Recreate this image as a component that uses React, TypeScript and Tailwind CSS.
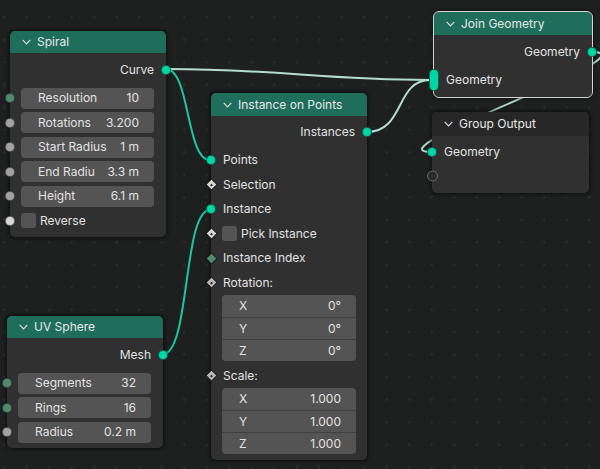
import React from 'react';

type SocketKind = 'geo' | 'float' | 'int' | 'bool' | 'dBool' | 'dInt' | 'dVec' | 'empty';

function Socket({ kind, side }: { kind: SocketKind; side: 'l' | 'r' }) {
  const pos = side === 'l' ? 'left-[-5px]' : 'right-[-5px]';
  if (kind === 'dBool' || kind === 'dInt' || kind === 'dVec') {
    const color = kind === 'dInt' ? 'bg-[#4f8a6e]' : kind === 'dBool' ? 'bg-[#d6d6d6]' : 'bg-[#b8b8b8]';
    return (
      <span className={`absolute ${pos} top-1/2 -translate-y-1/2 w-[10px] h-[10px] flex items-center justify-center`}>
        <span className={`w-[7px] h-[7px] rotate-45 ${color} outline outline-1 outline-[#1a1a1a]/70 flex items-center justify-center`}>
          {kind !== 'dInt' && <span className="w-[2px] h-[2px] bg-[#2a2a2a]" />}
        </span>
      </span>
    );
  }
  if (kind === 'empty') {
    return (
      <span className={`absolute ${pos} top-1/2 -translate-y-1/2 w-[11px] h-[11px] rounded-full border-[1.5px] border-[#6a6a6a] bg-[#2c2c2c]`} />
    );
  }
  const color =
    kind === 'geo' ? 'bg-[#00d6a3]' : kind === 'int' ? 'bg-[#4f8a6e]' : kind === 'bool' ? 'bg-[#d8d8d8]' : 'bg-[#a3a3a3]';
  return (
    <span className={`absolute ${pos} top-1/2 -translate-y-1/2 w-[10px] h-[10px] rounded-full ${color} border border-[#1a1a1a]/60`} />
  );
}

function Chevron() {
  return (
    <svg width="9" height="6" viewBox="0 0 9 6" className="shrink-0">
      <polyline points="0.7,0.8 4.5,4.8 8.3,0.8" fill="none" stroke="#dcdcdc" strokeWidth="1.2" />
    </svg>
  );
}

function Node({
  pos,
  title,
  header = 'bg-[#1e6e5b]',
  headerH = 'h-[22px]',
  selected = false,
  children,
}: {
  pos: string;
  title: string;
  header?: string;
  headerH?: string;
  selected?: boolean;
  children: React.ReactNode;
}) {
  return (
    <div
      className={`absolute ${pos} rounded-[5px] bg-[#303030] shadow-[0_0_3px_2px_rgba(0,0,0,0.4)] ${
        selected ? 'outline outline-[1.5px] outline-[#d4d4d4]' : ''
      }`}
    >
      <div className={`${headerH} ${header} rounded-t-[5px] flex items-center gap-[6px] pl-[12px] text-[12px] text-[#e8e8e8]`}>
        <Chevron />
        <span>{title}</span>
      </div>
      {children}
    </div>
  );
}

function OutRow({ label, kind, h = 'h-[25px]' }: { label: string; kind: SocketKind; h?: string }) {
  return (
    <div className={`relative ${h} flex items-center justify-end pr-[12px]`}>
      <span>{label}</span>
      <Socket kind={kind} side="r" />
    </div>
  );
}

function InRow({ label, kind, h = 'h-[24.5px]' }: { label: string; kind?: SocketKind; h?: string }) {
  return (
    <div className={`relative ${h} flex items-center pl-[12px]`}>
      <span>{label}</span>
      {kind && <Socket kind={kind} side="l" />}
    </div>
  );
}

function FieldRow({ label, value, kind }: { label: string; value: string; kind: SocketKind }) {
  return (
    <div className="relative h-[24.5px] flex items-center pl-[11px] pr-[12px]">
      <div className="flex-1 h-[21px] rounded-[4px] bg-[#545454] flex items-center justify-between pl-[17px] pr-[15px]">
        <span>{label}</span>
        <span>{value}</span>
      </div>
      <Socket kind={kind} side="l" />
    </div>
  );
}

function CheckRow({ label, kind, h = 'h-[24.5px]' }: { label: string; kind: SocketKind; h?: string }) {
  return (
    <div className={`relative ${h} flex items-center gap-[4px] pl-[11px]`}>
      <span className="w-[15px] h-[15px] rounded-[3px] bg-[#545454]" />
      <span>{label}</span>
      <Socket kind={kind} side="l" />
    </div>
  );
}

function VectorField({ values }: { values: [string, string][] }) {
  return (
    <div className="px-[11px]">
      <div className="rounded-[4px] bg-[#545454] flex flex-col">
        {values.map(([axis, v], i) => (
          <div
            key={axis}
            className={`h-[22px] flex items-center justify-between pl-[17px] pr-[15px] ${
              i > 0 ? 'border-t border-[#414141]' : ''
            }`}
          >
            <span>{axis}</span>
            <span>{v}</span>
          </div>
        ))}
      </div>
    </div>
  );
}

function Wires() {
  return (
    <svg className="absolute inset-0 pointer-events-none" width="600" height="469" viewBox="0 0 600 469">
      <g fill="none" strokeWidth="2" strokeLinecap="round">
        <path d="M591,52 C660,52 365,152 432,152" stroke="#aad6c7" />
        <path d="M166,69 C280,69 320,80 430,80" stroke="#b4ddd0" />
        <path d="M367,132 C405,132 395,80 430,80" stroke="#b4ddd0" />
        <path d="M166,69 C190,69 186,160 210,160" stroke="#1ec49e" />
        <path d="M163,354 C190,354 183,210 210,210" stroke="#1ec49e" />
      </g>
    </svg>
  );
}

export default function App() {
  return (
    <div
      className="relative w-[600px] h-[469px] overflow-hidden bg-[#1e1f1f] bg-[radial-gradient(circle,#2c2e2e_1px,transparent_1.5px)] bg-[length:22.5px_22.5px] bg-[position:-7px_6px] font-['Inter',sans-serif] text-[12px] text-[#e2e2e2]"
    >
      <Wires />

      {/* Spiral */}
      <Node pos="left-[10px] top-[31px] w-[156px]" title="Spiral">
        <div className="pt-[4px] pb-[4px]">
          <OutRow label="Curve" kind="geo" />
          <div className="mt-[4px]">
            <FieldRow label="Resolution" value="10" kind="int" />
            <FieldRow label="Rotations" value="3.200" kind="float" />
            <FieldRow label="Start Radius" value="1 m" kind="float" />
            <FieldRow label="End Radiu" value="3.3 m" kind="float" />
            <FieldRow label="Height" value="6.1 m" kind="float" />
            <CheckRow label="Reverse" kind="bool" h="h-[24px]" />
          </div>
        </div>
      </Node>

      {/* UV Sphere */}
      <Node pos="left-[7px] top-[316px] w-[156px]" title="UV Sphere">
        <div className="pt-[4px] pb-[3px]">
          <OutRow label="Mesh" kind="geo" />
          <div className="mt-[4px]">
            <FieldRow label="Segments" value="32" kind="int" />
            <FieldRow label="Rings" value="16" kind="int" />
            <FieldRow label="Radius" value="0.2 m" kind="float" />
          </div>
        </div>
      </Node>

      {/* Instance on Points */}
      <Node pos="left-[211px] top-[93px] w-[156px]" title="Instance on Points" headerH="h-[23px]">
        <div className="pt-[4px] pb-[6px]">
          <OutRow label="Instances" kind="geo" h="h-[24px]" />
          <div className="mt-[4px]">
            <InRow label="Points" kind="geo" />
            <InRow label="Selection" kind="dBool" />
            <InRow label="Instance" kind="geo" />
            <CheckRow label="Pick Instance" kind="dBool" />
            <InRow label="Instance Index" kind="dInt" />
            <InRow label="Rotation:" kind="dVec" />
            <VectorField values={[['X', '0°'], ['Y', '0°'], ['Z', '0°']]} />
            <div className="mt-[2px]">
              <InRow label="Scale:" kind="dVec" h="h-[25px]" />
            </div>
            <VectorField values={[['X', '1.000'], ['Y', '1.000'], ['Z', '1.000']]} />
          </div>
        </div>
      </Node>

      {/* Join Geometry */}
      <Node pos="left-[434px] top-[12px] w-[158px]" title="Join Geometry" headerH="h-[23px]" selected>
        <div className="pt-[4px] pb-[5px]">
          <OutRow label="Geometry" kind="geo" />
          <div className="relative mt-[4px] h-[24px] flex items-center pl-[12px]">
            <span>Geometry</span>
            <span className="absolute left-[-5px] top-1/2 -translate-y-1/2 w-[10px] h-[22px] rounded-full bg-[#00d6a3] border border-[#1a1a1a]/60" />
          </div>
        </div>
      </Node>

      {/* Group Output */}
      <Node pos="left-[432px] top-[112px] w-[157px]" title="Group Output" header="bg-[#272727]" headerH="h-[24px]">
        <div className="pt-[4px] pb-[5px]">
          <InRow label="Geometry" kind="geo" h="h-[24px]" />
          <InRow label="" kind="empty" h="h-[24px]" />
        </div>
      </Node>
    </div>
  );
}
